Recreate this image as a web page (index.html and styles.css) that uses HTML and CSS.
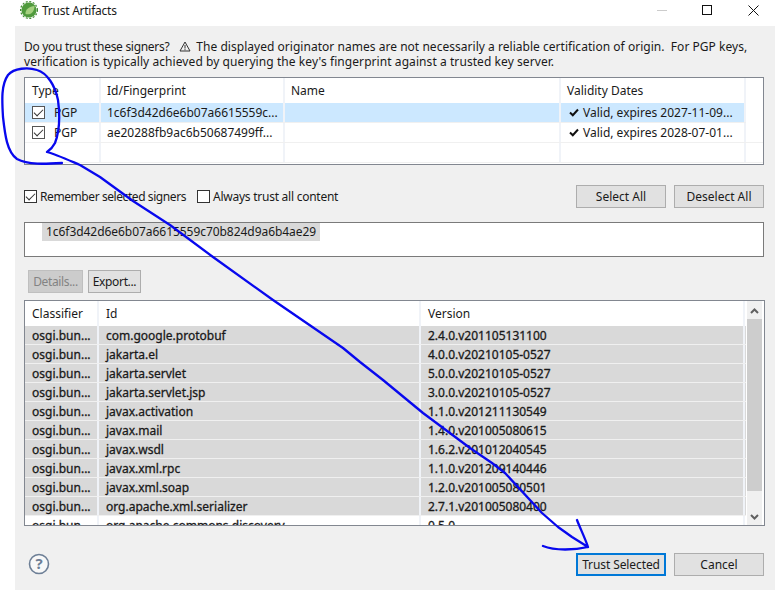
FILE: index.html

```html
<!DOCTYPE html>
<html lang="en">
<head>
    <meta charset="UTF-8">
    <title>Trust Artifacts</title>
    <link rel="stylesheet" href="styles.css">
</head>
<body>
    <div class="window">
        <div class="titlebar">
            <svg class="app-icon" width="18" height="18" viewBox="0 0 18 18">
                <circle cx="9" cy="9" r="7.6" fill="#4f9a3c"/>
                <circle cx="9" cy="9" r="8.4" fill="none" stroke="#3f8a30" stroke-width="1.2" stroke-dasharray="2 1.6"/>
                <path d="M5.5 13 C5 8.5 9.5 5.5 14.5 5 C14.5 10.5 11 14.5 5.5 13 Z" fill="#a5d07f"/>
            </svg>
            <span class="title">Trust Artifacts</span>
            <div class="win-controls">
                <span class="win-min"></span>
                <span class="win-max"></span>
                <svg width="11" height="11" viewBox="0 0 11 11"><path d="M0.5 0.5 L10.5 10.5 M10.5 0.5 L0.5 10.5" stroke="#111" stroke-width="1" fill="none"/></svg>
            </div>
        </div>

        <div class="dialog">
            <div class="intro">
                <div class="intro-line"><span class="intro-lead">Do you trust these signers?</span><svg class="warn" width="12" height="11" viewBox="0 0 12 11"><path d="M6 1 L11 10 L1 10 Z M6 4 L6 7.5 M6 8.2 L6 9.2" stroke="#333" fill="none"/></svg><span class="intro-rest">The displayed originator names are not necessarily a reliable certification of origin.&nbsp; For PGP keys,</span></div>
                <div class="intro-line wide">verification is typically achieved by querying the key's fingerprint against a trusted key server.</div>
            </div>

            <div class="table signers">
                <div class="row head">
                    <div class="cell c-type">Type</div>
                    <div class="cell c-fp">Id/Fingerprint</div>
                    <div class="cell c-name">Name</div>
                    <div class="cell c-valid">Validity Dates</div>
                </div>
                <div class="row selected">
                    <div class="cell c-type"><span class="check on"></span>PGP</div>
                    <div class="cell c-fp">1c6f3d42d6e6b07a6615559c...</div>
                    <div class="cell c-name"></div>
                    <div class="cell c-valid"><svg class="tick" width="10" height="9" viewBox="0 0 10 9"><path d="M1 4.5 L3.8 7.2 L9 1.5" stroke="#111" stroke-width="2" fill="none"/></svg>Valid, expires 2027-11-09...</div>
                </div>
                <div class="row">
                    <div class="cell c-type"><span class="check on"></span>PGP</div>
                    <div class="cell c-fp">ae20288fb9ac6b50687499ff...</div>
                    <div class="cell c-name"></div>
                    <div class="cell c-valid"><svg class="tick" width="10" height="9" viewBox="0 0 10 9"><path d="M1 4.5 L3.8 7.2 L9 1.5" stroke="#111" stroke-width="2" fill="none"/></svg>Valid, expires 2028-07-01...</div>
                </div>
                <div class="row">
                    <div class="cell c-type"></div>
                    <div class="cell c-fp"></div>
                    <div class="cell c-name"></div>
                    <div class="cell c-valid"></div>
                </div>
            </div>

            <div class="options">
                <label class="opt opt-remember"><span class="check on"></span>Remember selected signers</label>
                <label class="opt opt-always"><span class="check"></span>Always trust all content</label>
                <div class="spacer"></div>
                <button class="btn">Select All</button>
                <button class="btn">Deselect All</button>
            </div>

            <div class="fingerprint"><span class="fp-sel">1c6f3d42d6e6b07a6615559c70b824d9a6b4ae29</span></div>

            <div class="actions">
                <button class="btn small disabled">Details...</button>
                <button class="btn small">Export...</button>
            </div>

            <div class="table artifacts">
                <div class="art-body">
                    <div class="row head">
                        <div class="cell a-class">Classifier</div>
                        <div class="cell a-id">Id</div>
                        <div class="cell a-ver">Version</div>
                    </div>
                    <div class="row grey"><div class="cell a-class">osgi.bun...</div><div class="cell a-id">com.google.protobuf</div><div class="cell a-ver">2.4.0.v201105131100</div></div>
                    <div class="row grey"><div class="cell a-class">osgi.bun...</div><div class="cell a-id">jakarta.el</div><div class="cell a-ver">4.0.0.v20210105-0527</div></div>
                    <div class="row grey"><div class="cell a-class">osgi.bun...</div><div class="cell a-id">jakarta.servlet</div><div class="cell a-ver">5.0.0.v20210105-0527</div></div>
                    <div class="row grey"><div class="cell a-class">osgi.bun...</div><div class="cell a-id">jakarta.servlet.jsp</div><div class="cell a-ver">3.0.0.v20210105-0527</div></div>
                    <div class="row grey"><div class="cell a-class">osgi.bun...</div><div class="cell a-id">javax.activation</div><div class="cell a-ver">1.1.0.v201211130549</div></div>
                    <div class="row grey"><div class="cell a-class">osgi.bun...</div><div class="cell a-id">javax.mail</div><div class="cell a-ver">1.4.0.v201005080615</div></div>
                    <div class="row grey"><div class="cell a-class">osgi.bun...</div><div class="cell a-id">javax.wsdl</div><div class="cell a-ver">1.6.2.v201012040545</div></div>
                    <div class="row grey"><div class="cell a-class">osgi.bun...</div><div class="cell a-id">javax.xml.rpc</div><div class="cell a-ver">1.1.0.v201209140446</div></div>
                    <div class="row grey"><div class="cell a-class">osgi.bun...</div><div class="cell a-id">javax.xml.soap</div><div class="cell a-ver">1.2.0.v201005080501</div></div>
                    <div class="row grey"><div class="cell a-class">osgi.bun...</div><div class="cell a-id">org.apache.xml.serializer</div><div class="cell a-ver">2.7.1.v201005080400</div></div>
                    <div class="row plain"><div class="cell a-class">osgi.bun...</div><div class="cell a-id">org.apache.commons.discovery</div><div class="cell a-ver">0.5.0</div></div>
                </div>
                <div class="scrollbar">
                    <svg class="arrow" width="9" height="6" viewBox="0 0 9 6"><path d="M1 5 L4.5 1.5 L8 5" stroke="#606060" stroke-width="2" fill="none"/></svg>
                    <div class="thumb"></div>
                    <svg class="arrow" width="9" height="6" viewBox="0 0 9 6"><path d="M1 1 L4.5 4.5 L8 1" stroke="#606060" stroke-width="2" fill="none"/></svg>
                </div>
            </div>

            <div class="footer">
                <svg class="help" width="22" height="22" viewBox="0 0 22 22">
                    <circle cx="11" cy="11" r="9.5" fill="#f8f8f8" stroke="#6d7f96" stroke-width="1.6"/>
                    <text x="11" y="16" text-anchor="middle" class="help-mark">?</text>
                </svg>
                <div class="spacer"></div>
                <button class="btn default">Trust Selected</button>
                <button class="btn">Cancel</button>
            </div>
        </div>

        <!-- hand drawn annotation on top of the dialog -->
        <svg class="scribble" width="775" height="590" viewBox="0 0 775 590">
            <path d="M62 163 C45 164 28 165 17 159 C7 152 5 135 3 117 C2 100 1 85 8 75 C14 68 28 67 37 70 C47 73 55 85 58 100 C60 115 60 130 55 143 C53 147 50 150 47 152 C55 154 66 159 80 165 L100 177 L133 201 L170 225 L213 257 L273 300 L343 348 L360 362 L383 380 L423 413 L470 448 L492 463 L505 473 L542 513 L558 527 L572 537 L588 547 C585 538 580 528 577 520 M588 547 C575 550 555 551 543 546" fill="none" stroke="#0808ee" stroke-width="2.3" stroke-linecap="round" stroke-linejoin="round"/>
        </svg>
    </div>
</body>
</html>
```

FILE: styles.css

```css
* {
  box-sizing: border-box;
}

html, body {
  margin: 0;
  padding: 0;
}

body {
  width: 775px;
  height: 590px;
  overflow: hidden;
  background: #fff;
  font-family: "Noto Sans", "Liberation Sans", sans-serif;
  font-size: 12px;
  color: #1a1a1a;
}

.window {
  position: relative;
  width: 775px;
  height: 590px;
}

.titlebar {
  display: flex;
  align-items: center;
  height: 26px;
  padding: 0 0 6px 20px;
}

.app-icon {
  margin-right: 4px;
}

.title {
  letter-spacing: -0.25px;
}

.win-controls {
  display: flex;
  align-items: center;
  margin-left: auto;
}

.win-min {
  width: 10px;
  height: 1px;
  background: #ccc;
  margin-right: 35px;
}

.win-max {
  width: 10px;
  height: 10px;
  border: 1px solid #111;
  margin-right: 36px;
}

.win-controls svg {
  margin-right: 16px;
}

.dialog {
  margin-left: 15px;
  height: 564px;
  background: #f0f0f0;
  padding: 13px 11px 0 9px;
}

.intro {
  height: 30px;
  margin-bottom: 8px;
  line-height: 15px;
}

.intro-line {
  white-space: nowrap;
}

.intro-line.wide {
  letter-spacing: 0.07px;
}

.intro-lead {
  letter-spacing: -0.3px;
}

.intro-rest {
  letter-spacing: 0.03px;
}

.warn {
  margin: 0 5px 0 10px;
  vertical-align: -1px;
}

.table {
  background: #fff;
  border: 1px solid #828790;
  overflow: hidden;
}

.row {
  display: flex;
  height: 20px;
  border-bottom: 1px solid #f0f0f0;
}

.row.head {
  height: 25px;
  border-bottom: 0;
}

.cell {
  display: flex;
  align-items: center;
  flex: none;
  height: 100%;
  padding-left: 6px;
  border-right: 2px solid #f0f3f8;
  white-space: nowrap;
  overflow: hidden;
}

.signers {
  height: 88px;
  width: 740px;
}

.signers .c-type { width: 76px; }
.signers .c-fp { width: 184px; }
.signers .c-name { width: 276px; }
.signers .c-valid { width: 185px; }

.signers .head .c-type {
  padding-left: 7px;
}

.row.selected {
  width: 721px;
  background: #cce8ff;
}

.tick {
  flex: none;
  margin: 0 4px 0 2px;
}

.check {
  display: inline-block;
  position: relative;
  flex: none;
  width: 13px;
  height: 13px;
  background: #fff;
  border: 1px solid #333;
}

.check.on::after {
  content: "";
  position: absolute;
  left: 1px;
  top: 0;
  width: 8px;
  height: 4px;
  border-left: 1px solid #333;
  border-bottom: 1px solid #333;
  transform: translate(0, 2px) rotate(-45deg);
}

.signers .check {
  margin: 0 9px 0 1px;
  border-color: #555;
}

.options {
  display: flex;
  align-items: center;
  height: 23px;
  margin-top: 20px;
}

.opt {
  display: flex;
  align-items: center;
}

.opt .check {
  margin-right: 3px;
}

.opt-remember {
  margin-right: 11px;
  letter-spacing: -0.42px;
}

.opt-always {
  letter-spacing: -0.25px;
}

.spacer {
  flex: 1;
}

.btn {
  width: 90px;
  height: 23px;
  margin-left: 8px;
  padding: 0;
  background: #e1e1e1;
  border: 1px solid #adadad;
  font: inherit;
  color: #1a1a1a;
}

.btn:first-of-type {
  margin-left: 0;
}

.btn.default {
  border: 2px solid #0078d7;
  letter-spacing: -0.1px;
}

.fingerprint {
  height: 35px;
  margin-top: 14px;
  padding-left: 17px;
  background: #fff;
  border: 1px solid #7a7a7a;
}

.fp-sel {
  display: inline-block;
  height: 18px;
  padding: 0 4px;
  line-height: 17px;
  letter-spacing: -0.05px;
  background: #d9d9d9;
}

.actions {
  display: flex;
  height: 23px;
  margin-top: 13px;
  padding-left: 4px;
}

.btn.small {
  width: 53px;
  margin-left: 5px;
  letter-spacing: -0.35px;
}

.btn.small.disabled {
  width: 55px;
  margin-left: 0;
  background: #ccc;
  border-color: #bfbfbf;
  color: #838383;
}

.artifacts {
  display: flex;
  width: 741px;
  height: 226px;
  margin-top: 7px;
}

.art-body {
  width: 721px;
  flex: none;
}

.artifacts .a-class { width: 74px; padding-left: 7px; }
.artifacts .a-id { width: 322px; padding-left: 7px; }
.artifacts .a-ver { width: 324px; padding-left: 7px; }

.artifacts .row {
  height: 19px;
}

.artifacts .row.head {
  height: 25px;
}

.row.grey {
  background: #d9d9d9;
}

.row.grey .cell,
.row.plain .cell {
  -webkit-text-stroke: 0.3px #1a1a1a;
}

.scrollbar {
  display: flex;
  flex-direction: column;
  align-items: center;
  justify-content: space-between;
  width: 15px;
  margin-left: 1px;
  padding: 7px 0 5px;
  background: #f0f0f0;
}

.thumb {
  flex: 1;
  width: 100%;
  margin: 5px 0 23px;
  background: #cdcdcd;
}

.arrow {
  flex: none;
}

.footer {
  display: flex;
  align-items: center;
  height: 23px;
  margin-top: 27px;
  padding-left: 4px;
}

.help {
  margin-top: -2px;
}

.help-mark {
  font-size: 15px;
  font-weight: 700;
  fill: #6d7f96;
}

.scribble {
  position: absolute;
  left: 0;
  top: 0;
  pointer-events: none;
}
```
